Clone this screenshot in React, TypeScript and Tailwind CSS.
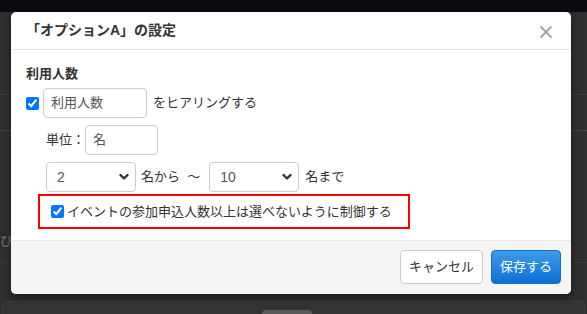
import { useState } from "react";

function Chevron() {
  return (
    <svg width="10" height="7" viewBox="0 0 10 7" className="pointer-events-none absolute right-[7px] top-1/2 -translate-y-1/2">
      <path d="M1.5 1.5 L5 5 L8.5 1.5" fill="none" stroke="#333" strokeWidth="2.4" strokeLinecap="round" strokeLinejoin="round" />
    </svg>
  );
}

function Select({ value, w }: { value: string; w: string }) {
  return (
    <div className={`relative h-[30px] ${w}`}>
      <div className="flex h-full items-center rounded-[4px] border border-[#ccc] bg-white pl-[10px] text-[14px] text-[#555]">
        {value}
      </div>
      <Chevron />
    </div>
  );
}

export default function App() {
  const [limit, setLimit] = useState(true);
  const [hear, setHear] = useState(true);

  return (
    <div className="relative h-[314px] w-[587px] overflow-hidden bg-[#2f2f2f] font-['Liberation_Sans','Noto_Sans_CJK_JP',sans-serif]">
      {/* page behind the overlay */}
      <div className="h-[12px] bg-[#0b0c0f]" />
      <div className="h-[83px] border-b border-[#3d3d3d]" />
      <div className="mt-[35px] h-0 border-b border-dotted border-[#555]" />
      <div className="h-[132px] border-b border-[#3a3a3a] pt-[100px] text-[13px] text-[#777]">び</div>
      <div className="mx-[2px] mt-[38px] h-[20px] rounded-t-[4px] border border-[#3b3b3b] bg-[#333]" />
      <div className="absolute bottom-0 left-[262px] h-[4px] w-[50px] rounded-t-[4px] bg-[#5a5a5a]" />

      {/* modal */}
      <div className="absolute left-[11px] top-[12px] flex w-[560px] flex-col overflow-hidden rounded-[5px] bg-white shadow-[0_3px_9px_rgba(0,0,0,0.5)]">
        <div className="flex h-[38px] items-center justify-between border-b border-[#e5e5e5] pl-[15px] pr-[18px]">
          <div className="text-[14px] font-bold text-[#333]">「オプションA」の設定</div>
          <svg width="14" height="14" viewBox="0 0 14 14" className="mt-[2px]">
            <path d="M1.5 1.5 L12.5 12.5 M12.5 1.5 L1.5 12.5" stroke="#a6a6a6" strokeWidth="2" />
          </svg>
        </div>

        <div className="h-[190px] px-[15px] pt-[15px] text-[13px] text-[#333]">
          <div className="h-[18px] font-bold leading-[18px]">利用人数</div>
          <div className="mt-[5px] flex h-[30px] items-center">
            <input
              type="checkbox"
              checked={hear}
              onChange={() => setHear(!hear)}
              className="m-0 h-[13px] w-[13px] accent-[#0075ff]"
            />
            <div className="ml-[4px] flex h-[30px] w-[104px] items-center rounded-[4px] border border-[#ccc] pl-[7px] text-[#555]">
              利用人数
            </div>
            <span className="ml-[6px]">をヒアリングする</span>
          </div>

          <div className="ml-[20px] mt-[7px] flex h-[30px] items-center">
            <span>単位：</span>
            <div className="flex h-[30px] w-[73px] items-center rounded-[4px] border border-[#ccc] pl-[7px] text-[#555]">
              名
            </div>
          </div>

          <div className="ml-[20px] mt-[7px] flex h-[30px] items-center">
            <Select value="2" w="w-[90px]" />
            <span className="ml-[5px] whitespace-pre">名から  ～</span>
            <div className="ml-[9px]">
              <Select value="10" w="w-[90px]" />
            </div>
            <span className="ml-[6px]">名まで</span>
          </div>

          <div className="ml-[12px] mt-[2px] flex h-[35px] w-[372px] items-center border-2 border-[#f00] pl-[11px]">
            <input
              type="checkbox"
              checked={limit}
              onChange={() => setLimit(!limit)}
              className="m-0 h-[13px] w-[13px] accent-[#0075ff]"
            />
            <span className="ml-[3px] text-[13px]">イベントの参加申込人数以上は選べないように制御する</span>
          </div>
        </div>

        <div className="flex h-[54px] items-start justify-end gap-[8px] border-t border-[#e5e5e5] bg-[#f5f5f5] pr-[10px] pt-[9px]">
          <button className="h-[34px] w-[83px] rounded-[4px] border border-[#ccc] bg-white text-[13px] text-[#333]">
            キャンセル
          </button>
          <button className="h-[34px] w-[70px] rounded-[4px] border border-[#1a6fc4] bg-gradient-to-b from-[#3a9be8] to-[#0a70d6] text-[13px] text-white">
            保存する
          </button>
        </div>
      </div>
    </div>
  );
}
